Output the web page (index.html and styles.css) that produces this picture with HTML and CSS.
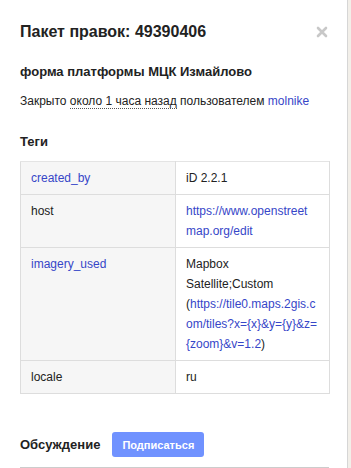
FILE: index.html
```html
<!DOCTYPE html>
<html>
<head>
    <title>Пакет правок: 49390406</title>
    <link rel="stylesheet" href="styles.css">
</head>
<body>
    <div class="sidebar">
        <div class="changeset">
            <div class="title-row">
                <h2>Пакет правок: 49390406</h2>
                <a class="close" href="#" title="Закрыть">
                    <svg width="12" height="12" viewBox="0 0 12 12">
                        <path d="M2 2 L10 10 M10 2 L2 10" stroke="#c8c8c8" stroke-width="2.6" stroke-linecap="round"/>
                    </svg>
                </a>
            </div>

            <h4 class="comment">форма платформы МЦК Измайлово</h4>

            <p class="details">
                Закрыто <abbr title="2017-06-14 10:21:05 UTC">около 1 часа назад</abbr> пользователем <a href="#">molnike</a>
            </p>

            <h4 class="section-title">Теги</h4>
            <table class="tags">
                <tr>
                    <th><a href="#">created_by</a></th>
                    <td>iD 2.2.1</td>
                </tr>
                <tr>
                    <th>host</th>
                    <td><a href="#">https://www.openstreetmap.org/edit</a></td>
                </tr>
                <tr>
                    <th><a href="#">imagery_used</a></th>
                    <td>Mapbox Satellite;Custom (<a href="#">https://tile0.maps.2gis.c<wbr><span class="nowrap">om/tiles?x={x}&amp;y={y}&amp;z=</span><wbr>{zoom}&amp;v=1.2</a>)</td>
                </tr>
                <tr>
                    <th>locale</th>
                    <td>ru</td>
                </tr>
            </table>

            <div class="discussion">
                <h4>Обсуждение</h4>
                <button type="button">Подписаться</button>
            </div>
        </div>
    </div>
    <div class="map-edge"></div>
</body>
</html>
```

FILE: styles.css
```css
html, body {
    height: 100%;
}

body {
    margin: 0;
    display: flex;
    font-family: "Liberation Sans", Arial, sans-serif;
    color: #222;
    background: #fff;
    overflow: hidden;
}

a {
    color: #3646c8;
    text-decoration: none;
}

.nowrap {
    white-space: nowrap;
}

/* Sidebar panel */
.sidebar {
    width: 347px;
    border-right: 1px solid #d6d6d6;
    flex-shrink: 0;
}

.changeset {
    padding: 20px 18px 0 20px;
}

.title-row {
    display: flex;
    align-items: center;
    justify-content: space-between;
    height: 24px;
}

.title-row h2 {
    margin: 0;
    font-size: 16px;
    line-height: 24px;
    font-weight: bold;
}

.close {
    display: flex;
    margin-right: 1px;
}

.comment {
    margin: 18px 0 0;
    font-size: 13px;
    line-height: 20px;
    font-weight: bold;
}

.details {
    margin: 9px 0 0;
    font-size: 12px;
    line-height: 20px;
}

abbr {
    text-decoration: none;
    border-bottom: 1px dotted #555;
}

.section-title {
    margin: 21px 0 0;
    font-size: 13px;
    line-height: 20px;
    font-weight: bold;
}

/* Tags table */
.tags {
    margin-top: 9px;
    width: 310px;
    border-collapse: collapse;
    table-layout: fixed;
    font-size: 12px;
    line-height: 20px;
}

.tags th,
.tags td {
    border: 1px solid #ddd;
    padding: 6px 10px;
    vertical-align: top;
    text-align: left;
    word-wrap: break-word;
    overflow-wrap: anywhere;
}

.tags td {
    padding-right: 12px;
}

.tags th {
    width: 134px;
    font-weight: normal;
    background: #f6f6f6;
}

.tags tr:first-child th,
.tags tr:first-child td {
    border-top-color: #e4e4e4;
}

/* Discussion */
.discussion {
    display: flex;
    align-items: center;
    gap: 12px;
    margin-top: 38px;
    padding-bottom: 10px;
    border-bottom: 1px solid #ccc;
    width: 309px;
}

.discussion h4 {
    margin: 0;
    font-size: 13px;
    font-weight: bold;
}

.discussion button {
    height: 25px;
    padding: 0 10px;
    border: none;
    border-radius: 3px;
    background: #7092ff;
    color: #fff;
    font-family: "Liberation Sans", Arial, sans-serif;
    font-size: 11px;
    font-weight: bold;
}

.map-edge {
    flex: 1;
    background: #f2efe9;
}
```
